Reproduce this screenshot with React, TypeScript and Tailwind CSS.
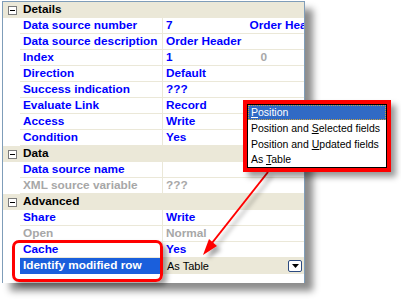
import React from "react";

type Row =
  | { kind: "head"; title: string }
  | { kind: "prop"; name: string; value?: string; extra?: React.ReactNode; dim?: boolean; selected?: boolean };

const rows: Row[] = [
  { kind: "head", title: "Details" },
  { kind: "prop", name: "Data source number", value: "7", extra: <span className="ml-[77px] text-[#0000ff]">Order Hea</span> },
  { kind: "prop", name: "Data source description", value: "Order Header" },
  { kind: "prop", name: "Index", value: "1", extra: <span className="ml-[88px] text-[#a8a8a8]">0</span> },
  { kind: "prop", name: "Direction", value: "Default" },
  { kind: "prop", name: "Success indication", value: "???" },
  { kind: "prop", name: "Evaluate Link", value: "Record" },
  { kind: "prop", name: "Access", value: "Write" },
  { kind: "prop", name: "Condition", value: "Yes" },
  { kind: "head", title: "Data" },
  { kind: "prop", name: "Data source name", value: "" },
  { kind: "prop", name: "XML source variable", value: "???", dim: true },
  { kind: "head", title: "Advanced" },
  { kind: "prop", name: "Share", value: "Write" },
  { kind: "prop", name: "Open", value: "Normal", dim: true },
  { kind: "prop", name: "Cache", value: "Yes" },
  { kind: "prop", name: "Identify modified row", selected: true },
];

function MinusBox() {
  return (
    <span className="flex h-[9px] w-[9px] items-center justify-center border border-[#7a7a7a] bg-white">
      <span className="h-px w-[5px] bg-black" />
    </span>
  );
}

function HeadRow({ title }: { title: string }) {
  return (
    <div className="flex h-[16px] items-center bg-[#ebe8d8]">
      <div className="flex w-[17px] justify-center pl-[2px]">
        <MinusBox />
      </div>
      <span className="pl-[3px] font-bold text-black">{title}</span>
    </div>
  );
}

function PropRow({ row }: { row: Extract<Row, { kind: "prop" }> }) {
  const color = row.dim ? "text-[#a7a7a7]" : "text-[#0000ff]";
  if (row.selected) {
    return (
      <div className="flex h-[16px]">
        <div className="w-[17px]" />
        <div className="flex w-[143px] items-center bg-[#1a5fdc] pl-[3px] font-bold text-white">{row.name}</div>
        <div className="flex flex-1 items-center bg-[#ebe8d8] pl-[4px] pr-[2px] text-[11px] text-black">
          <span className="flex-1">As Table</span>
          <span className="flex h-[12px] w-[14px] items-center justify-center rounded-[2px] border border-[#2c4a80] bg-white">
            <svg width="7" height="4" viewBox="0 0 7 4">
              <polygon points="0,0 7,0 3.5,4" fill="#000" />
            </svg>
          </span>
        </div>
      </div>
    );
  }
  return (
    <div className="flex h-[16px]">
      <div className="w-[17px]" />
      <div className={`flex w-[143px] items-center border-r border-b border-[#ebe8d8] pl-[3px] font-bold ${color}`}>
        {row.name}
      </div>
      <div className={`flex flex-1 items-center overflow-hidden whitespace-nowrap border-b border-[#ebe8d8] pl-[3px] font-bold ${color}`}>
        <span>{row.value}</span>
        {row.extra}
      </div>
    </div>
  );
}

function Arrow() {
  return (
    <svg className="pointer-events-none absolute left-0 top-0" width="401" height="302">
      <defs>
        <filter id="sh" x="-20%" y="-20%" width="140%" height="140%">
          <feDropShadow dx="4" dy="4" stdDeviation="2" floodColor="#000" floodOpacity="0.35" />
        </filter>
      </defs>
      <g filter="url(#sh)">
        <line x1="268" y1="172" x2="212" y2="243" stroke="#ff0000" strokeWidth="2" />
        <polygon points="203,255 217,246 209,239" fill="#ff0000" />
      </g>
    </svg>
  );
}

const u = "underline underline-offset-[1px]";

export default function App() {
  return (
    <div className="relative h-[302px] w-[401px] overflow-hidden bg-white font-['Liberation_Sans',Arial,sans-serif] text-[11.8px] leading-none">
      <div className="ml-[2px] mt-[1px] h-[282px] w-[303px] border border-b-0 border-[#7f9db9] bg-white shadow-[8px_8px_7px_rgba(0,0,0,0.45)]">
        {rows.map((r, i) =>
          r.kind === "head" ? <HeadRow key={i} title={r.title} /> : <PropRow key={i} row={r} />
        )}
      </div>

      <div className="absolute left-[12px] top-[240px] h-[42px] w-[151px] rounded-[7px] border-[3px] border-[#ff0000] shadow-[4px_4px_5px_rgba(0,0,0,0.35)]" />

      <Arrow />

      <div className="absolute left-[243px] top-[100px] h-[72px] w-[148px] border-4 border-[#ff0000] shadow-[5px_5px_6px_rgba(0,0,0,0.4)]">
        <div className="h-full border border-black bg-white text-[10.5px] text-black">
          <div className="flex h-[15px] items-center border border-dotted border-[#c8a040] bg-[#316ac5] pl-[2px] text-white">
            <span>
              <span className={u}>P</span>osition
            </span>
          </div>
          <div className="flex h-[16px] items-center pl-[3px]">
            <span>
              Position and <span className={u}>S</span>elected fields
            </span>
          </div>
          <div className="flex h-[16px] items-center pl-[3px]">
            <span>
              Position and <span className={u}>U</span>pdated fields
            </span>
          </div>
          <div className="flex h-[15px] items-center pl-[3px]">
            <span>
              As <span className={u}>T</span>able
            </span>
          </div>
        </div>
      </div>
    </div>
  );
}
